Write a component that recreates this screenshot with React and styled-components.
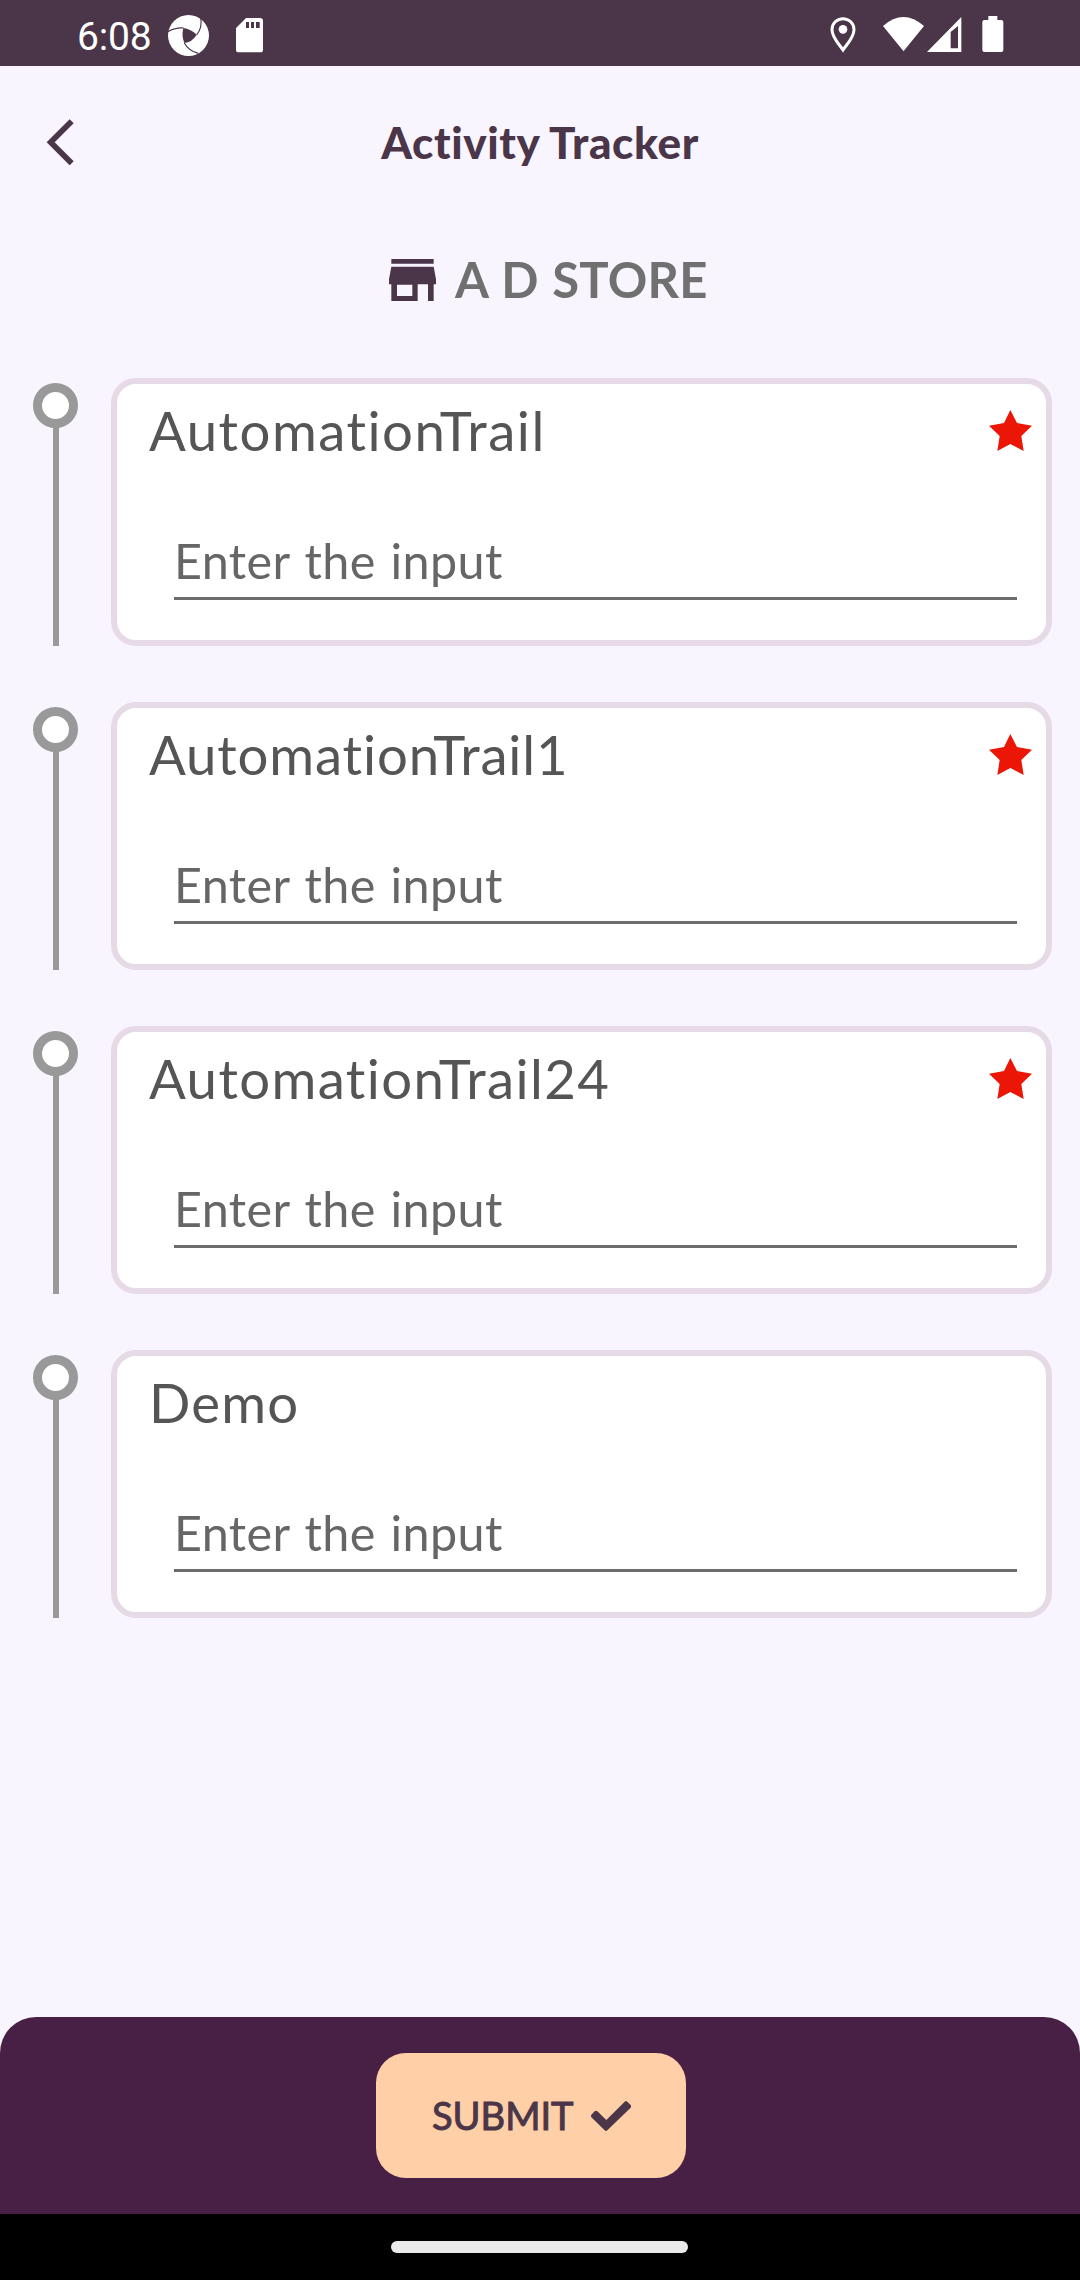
import React from "react";
import styled, { createGlobalStyle } from "styled-components";

const Global = createGlobalStyle`
  * { box-sizing: border-box; }
  body { margin: 0; background: #f8f5ff; }
`;

const Screen = styled.div`
  width: 1080px;
  height: 2280px;
  display: flex;
  flex-direction: column;
  background: #f8f5ff;
  font-family: Lato, "Open Sans", sans-serif;
  font-variant-ligatures: none;
  overflow: hidden;
`;

const StatusBar = styled.header`
  height: 66px;
  flex: none;
  display: flex;
  justify-content: space-between;
  padding: 0 76px 0 77px;
  background: #4a3648;
  color: #fff;
`;

const StatusGroup = styled.div`
  display: flex;
  align-items: flex-start;
`;

const Clock = styled.span`
  width: 91px;
  font: 400 39px/66px Roboto, sans-serif;
  padding-top: 4px;
  letter-spacing: -0.2px;
  white-space: nowrap;
`;

const Icon = styled.svg`
  display: block;
  flex: none;
  margin: ${(p) => p.$m || "0"};
`;

const AppBar = styled.div`
  height: 154px;
  flex: none;
  display: grid;
  grid-template-columns: 120px 1fr 120px;
`;

const BackButton = styled.button`
  display: flex;
  align-items: flex-start;
  border: 0;
  padding: 53px 0 0 46px;
  background: none;
`;

const Title = styled.h1`
  margin: 0;
  padding-top: 44px;
  font-size: 44px;
  line-height: 64px;
  font-weight: 900;
  letter-spacing: 0.6px;
  text-align: center;
  color: #4a3648;
`;

const StoreRow = styled.div`
  height: 158px;
  flex: none;
  display: flex;
  padding-left: 389px;
  gap: 19px;
`;

const StoreName = styled.h2`
  margin: 0;
  padding-top: 27px;
  font-size: 49px;
  line-height: 64px;
  font-weight: 700;
  letter-spacing: 0.2px;
  word-spacing: 1.5px;
  color: #707070;
  white-space: nowrap;
`;

const List = styled.main`
  flex: 1;
  display: flex;
  flex-direction: column;
  gap: 56px;
`;

const Row = styled.section`
  height: 268px;
  display: flex;
  padding: 0 28px 0 33px;
`;

const Rail = styled.div`
  width: 78px;
  display: flex;
  flex-direction: column;
  padding-top: 5px;
`;

const Dot = styled.div`
  width: 45px;
  height: 45px;
  border: 9px solid #999;
  border-radius: 50%;
  background: #fff;
`;

const Stem = styled.div`
  width: 6px;
  flex: 1;
  margin: -2px 0 0 20px;
  background: #999;
`;

const Card = styled.div`
  flex: 1;
  border: 6px solid #e6dae7;
  border-radius: 25px;
  background: #fff;
  padding: 14px 13px 0 32px;
`;

const CardHead = styled.div`
  height: 68px;
  display: flex;
  justify-content: space-between;
`;

const Label = styled.h3`
  margin: 0;
  font-size: 54.5px;
  line-height: 64px;
  font-weight: 400;
  letter-spacing: ${(p) => p.$track || 0}px;
  color: #555;
`;

const Field = styled.input`
  display: block;
  width: 843px;
  height: 72px;
  margin: 62px 0 0 25px;
  padding: 0 0 5px;
  border: 0;
  border-bottom: 3px solid #6c6c6c;
  border-radius: 0;
  outline: 0;
  background: none;
  font: 400 48.5px/64px Lato, "Open Sans", sans-serif;
  letter-spacing: 0.4px;
  word-spacing: 2px;
  &::placeholder { color: #666; opacity: 1; }
`;

const Footer = styled.footer`
  height: 197px;
  flex: none;
  padding: 36px 0 0 376px;
  border-radius: 36px 36px 0 0;
  background: #482046;
`;

const Submit = styled.button`
  width: 310px;
  height: 125px;
  display: flex;
  align-items: center;
  padding: 0 0 0 56px;
  border: 0;
  border-radius: 30px;
  background: #ffcfa8;
  color: #4a3648;
  font: 400 38px/60px Lato, "Open Sans", sans-serif;
`;

const SubmitText = styled.span`
  width: 159px;
  padding-bottom: 2px;
  text-align: left;
  letter-spacing: 0;
  -webkit-text-stroke: 1px currentColor;
  white-space: nowrap;
`;

const NavBar = styled.nav`
  height: 66px;
  flex: none;
  display: flex;
  padding: 27px 0 0 391px;
  background: #000;
`;

const Handle = styled.div`
  width: 297px;
  height: 12px;
  border-radius: 6px;
  background: #eaeaea;
`;

const Star = () => (
  <Icon $m="12px 0 0" width="44" height="44" viewBox="0 0 132 132" fill="#ec1606">
    <path d="M64 0l20 39 45 8-32 31 7 45-40-21-39 21 7-45L0 47l45-8z" />
  </Icon>
);

const items = [
  { name: "AutomationTrail", required: true, track: 1.5 },
  { name: "AutomationTrail1", required: true, track: 0.85 },
  { name: "AutomationTrail24", required: true, track: 1.4 },
  { name: "Demo", required: false, track: 1.2 },
];

export default function App() {
  return (
    <Screen>
      <Global />
      <StatusBar>
        <StatusGroup>
          <Clock>6:08</Clock>
          <Icon $m="15px 0 0" width="41" height="41" viewBox="0 0 123 123">
            <circle cx="61.5" cy="61.5" r="61.5" fill="#fff" />
            <path d="M46 39Q68 42 86 59Q72 82 49 84Q40 62 46 39Z" fill="#4a3648" />
            <g fill="none" stroke="#4a3648" strokeWidth="3.5">
              <path d="M0 50Q22 37 47 39" />
              <path d="M98 8Q104 37 86 60" />
              <path d="M49 84Q62 108 91 115" />
            </g>
          </Icon>
          <Icon $m="18px 0 0 27px" width="27" height="35" viewBox="0 0 81 105" fill="#fff">
            <path fillRule="evenodd" d="M30 0h42q9 0 9 9v86q0 8-8 8H8q-8 0-8-8V30zM30 12v18h9V12zm15 0v18h9V12zm15 0v18h11V12z" />
          </Icon>
        </StatusGroup>
        <StatusGroup>
          <Icon $m="17px 27px 0 0" width="26" height="36" viewBox="0 0 78 108">
            <path d="M39 5C21 5 6 19 6 38c0 23 21 43 33 61 12-18 33-38 33-61C72 19 57 5 39 5z" fill="none" stroke="#fff" strokeWidth="9" />
            <circle cx="39" cy="37" r="13" fill="#fff" />
          </Icon>
          <Icon $m="17px 3px 0 0" width="41" height="35" viewBox="0 0 123 105" fill="#fff">
            <path d="M0 27Q61-27 123 27L61.5 103z" />
          </Icon>
          <Icon $m="17px 20px 0 0" width="35" height="35" viewBox="0 0 105 105" fill="#fff">
            <path fillRule="evenodd" d="M103 0v105H0zM71 45v49h22V27z" />
          </Icon>
          <Icon $m="16px 0 0" width="22" height="36" viewBox="0 0 66 108" fill="#fff">
            <path d="M19 0h27v12h12q6 0 6 6v84q0 6-6 6H7q-6 0-6-6V18q0-6 6-6h12z" />
          </Icon>
        </StatusGroup>
      </StatusBar>
      <AppBar>
        <BackButton aria-label="Back">
          <Icon width="28" height="46" viewBox="0 0 84 138">
            <path d="M77 7L14 70l63 63" fill="none" stroke="#4a3648" strokeWidth="17" />
          </Icon>
        </BackButton>
        <Title>Activity Tracker</Title>
      </AppBar>
      <StoreRow>
        <Icon $m="39px 0 0" width="47" height="42" viewBox="0 0 141 126" fill="#4a3648">
          <path fillRule="evenodd" d="M7 0h127v14H7zM7 23h127l7 38v15h-7v50h-17V76H86v50H7V76H0V61zM24 77v34h46V77z" />
        </Icon>
        <StoreName>A D STORE</StoreName>
      </StoreRow>
      <List>
        {items.map((item) => (
          <Row key={item.name}>
            <Rail>
              <Dot />
              <Stem />
            </Rail>
            <Card>
              <CardHead>
                <Label $track={item.track}>{item.name}</Label>
                {item.required && <Star />}
              </CardHead>
              <Field placeholder="Enter the input" />
            </Card>
          </Row>
        ))}
      </List>
      <Footer>
        <Submit>
          <SubmitText>SUBMIT</SubmitText>
          <Icon width="40" height="30" viewBox="0 0 120 90" fill="#4a3648">
            <path d="M1 41L11 31q4-3 8 0l27 26L101 2q4-4 8 0l10 10q3 4 0 8L49 88q-4 4-8 0L1 49q-2-4 0-8z" />
          </Icon>
        </Submit>
      </Footer>
      <NavBar><Handle /></NavBar>
    </Screen>
  );
}
